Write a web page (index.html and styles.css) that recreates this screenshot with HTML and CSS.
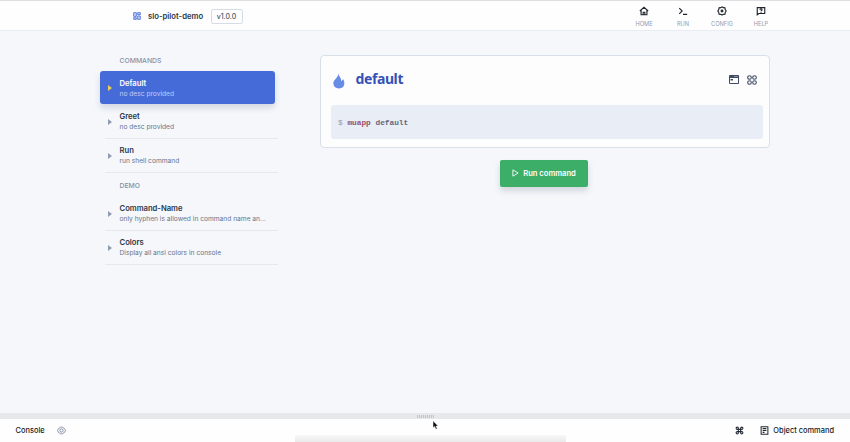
FILE: index.html
```html
<!DOCTYPE html>
<html lang="en">
<head>
<meta charset="utf-8">
<title>slo-pilot-demo</title>
<link rel="stylesheet" href="styles.css">
</head>
<body>
<header class="header">
  <div class="brand">
    <svg class="logo" viewBox="0 0 24 24"><path d="M2 2h8v11H2zM14 2h8v6h-8zM14 12h8v10h-8zM2 17h8v5H2z" fill="#c9d6fa" stroke="#4a6fdc" stroke-width="2.600"/></svg>
    <span class="brand-name">slo-pilot-demo</span>
    <span class="version">v1.0.0</span>
  </div>
  <nav class="nav">
    <a class="nav-item"><svg viewBox="0 0 24 24"><path d="M2 12 12 3l10 9M5 10v11h14V10M10 21v-6h4v6"/></svg>HOME</a>
    <a class="nav-item"><svg viewBox="0 0 24 24"><path d="m3 5 7 7-7 7M12 20h10"/></svg>RUN</a>
    <a class="nav-item"><svg viewBox="0 0 24 24"><path d="m12 2 3 2 4 .5.8 4L22 12l-2.200 3.500-.8 4-4 .5-3 2-3-2-4-.5-.8-4L2 12l2.200-3.500.8-4L9 4z"/><circle cx="12" cy="12" r="2.200"/></svg>CONFIG</a>
    <a class="nav-item"><svg viewBox="0 0 24 24"><path d="M3 21V4h18v14H7zM9.500 9c0-3 5-3 5 0 0 2-2.500 1.500-2.500 3.500M12 14.200v1.800"/></svg>HELP</a>
  </nav>
</header>
<main class="main">
  <aside class="sidebar">
    <h2 class="group">COMMANDS</h2>
    <div class="item active"><i class="arrow"></i><div class="item-text"><b>Default</b><p>no desc provided</p></div></div>
    <div class="item"><i class="arrow"></i><div class="item-text"><b>Greet</b><p>no desc provided</p></div></div>
    <div class="item"><i class="arrow"></i><div class="item-text"><b>Run</b><p>run shell command</p></div></div>
    <h2 class="group demo">DEMO</h2>
    <div class="item"><i class="arrow"></i><div class="item-text"><b>Command-Name</b><p>only hyphen is allowed in command name an...</p></div></div>
    <div class="item"><i class="arrow"></i><div class="item-text"><b>Colors</b><p>Display all ansi colors in console</p></div></div>
  </aside>
  <section class="content">
    <article class="card">
      <div class="card-head">
        <svg class="flame" viewBox="0 0 12 17"><path d="M5.500 0C5.500 2 6 3 7 4.200c1 1.300 1.600 2.600 1.100 4.300 1.200-.2 1.900-.9 2.200-2C13.200 11 11.500 16.500 6 16.500 2.500 16.500 0 14 0 11c0-2.500 1.500-3.700 3-5.500C4.500 4 5.300 2 5.500 0z"/></svg>
        <h1>default</h1>
        <div class="tools">
          <svg class="window" viewBox="0 0 20 18"><path d="M1 1h18v16H1z" fill="none" stroke="#414b65" stroke-width="2"/><path d="M1 1h18v5H1zM3 8h5v3H3z" fill="#414b65"/><path d="M11 3h2M15 3h2" stroke="#fff" stroke-width="1.500"/></svg>
          <svg class="grid" viewBox="0 0 20 20"><g fill="none" stroke="#414b65" stroke-width="2.200"><circle cx="5" cy="5" r="3.600"/><circle cx="15" cy="5" r="3.600"/><circle cx="5" cy="15" r="3.600"/><circle cx="15" cy="15" r="3.600"/></g></svg>
        </div>
      </div>
      <pre class="code"><span class="prompt">$</span> <span class="app">muapp</span> default</pre>
    </article>
    <button class="run"><svg viewBox="0 0 8 9"><path d="M1 .9 7 4.500 1 8.100z"/></svg>Run command</button>
  </section>
</main>
<div class="resizer"><span class="grip"></span></div>
<footer class="footer">
  <span class="console">Console</span>
  <svg class="eye" viewBox="0 0 24 24"><path d="M1.500 12C6 0 18 0 22.500 12 18 24 6 24 1.500 12z"/><circle cx="12" cy="12" r="4.300"/></svg>
  <svg class="cmd" viewBox="0 0 24 24"><path d="M9 9V6a3 3 0 1 0-3 3h12a3 3 0 1 0-3-3v12a3 3 0 1 0 3-3H6a3 3 0 1 0 3 3z"/></svg>
  <svg class="note" viewBox="0 0 24 24"><path d="M3 2h18v20H3zM7 7h10M7 12h10M7 17h5"/></svg>
  <span>Object command</span>
  <span class="dock"></span>
</footer>
<svg class="cursor" viewBox="0 0 7 10"><path d="M1 .8v7l1.500-1.300L4 9.300l1.200-.7-1.300-2.500h2.300z" fill="#111" stroke="#fff" stroke-width=".5"/></svg>
</body>
</html>
```
FILE: styles.css
```css
* { box-sizing: border-box; }
body {
  margin: 0;
  height: 442px;
  display: flex;
  flex-direction: column;
  overflow: hidden;
  background: #f5f7fb;
  color: #2d3748;
  font-family: Inter, sans-serif;
}
svg { display: block; flex: none; }
h1, h2, p, pre { margin: 0; }
.header {
  height: 31px;
  flex: none;
  display: flex;
  justify-content: space-between;
  padding: 0 69.500px 0 133px;
  background: #fefefe;
  border-top: 1px solid #dedfe1;
  border-bottom: 1px solid #e8edf4;
}
.brand { display: flex; align-items: center; padding-top: 1px; font-size: 7.7px; font-weight: 600; }
.logo { width: 8px; height: 8px; margin: -1px 7px 0 0; }
.brand-name { width: 62.500px; white-space: nowrap; }
.version {
  height: 15px;
  width: 32px;
  line-height: 13px;
  text-align: center;
  border: 1px solid #d5dce6;
  border-radius: 2px;
  color: #4a5568;
  font-size: 7px;
  font-weight: 500;
}
.nav { display: flex; padding-top: 5px; }
.nav-item {
  width: 39px;
  display: flex;
  flex-direction: column;
  align-items: center;
  gap: 4px;
  color: #929cb0;
  font-size: 5.7px;
  line-height: 7px;
}
.nav-item svg { width: 10px; height: 10px; fill: none; stroke: #20252e; stroke-width: 2.7; }
.main { flex: 1; min-height: 0; display: flex; padding: 24px 80px 0 100px; gap: 45px; }
.sidebar { width: 175px; flex: none; }
.group {
  height: 16px;
  padding: 1px 0 0 19.500px;
  color: #8490a6;
  font-size: 6.8px;
  line-height: 9px;
  font-weight: 500;
}
.demo { height: 24px; padding-top: 8px; }
.item { position: relative; height: 34px; display: flex; align-items: center; padding-left: 8px; }
.item:not(.active)::after {
  content: "";
  position: absolute;
  left: 5px;
  right: -3px;
  bottom: 0;
  height: 1px;
  background: #e4e9f0;
}
.active {
  height: 33px;
  margin-bottom: 1px;
  background: #456bd8;
  border-radius: 3px;
  box-shadow: 0 4px 6px rgba(50, 65, 100, .17);
}
.arrow { border: 3px solid transparent; border-left: 4px solid #929cb1; border-right: 0; }
.active .arrow { border-left-color: #edcd58; }
.item-text { width: 150px; margin-left: 7.500px; }
.active .item-text { padding-top: 2px; }
.item b { display: block; font-size: 7.65px; line-height: 11px; font-weight: 600; }
.item p {
  white-space: nowrap;
  color: #68758c;
  font-size: 6.65px;
  line-height: 11px;
}
.active b { color: #fff; }
.active p { color: #c0cefa; }
.content { width: 450px; display: flex; flex-direction: column; align-items: center; }
.card {
  width: 450px;
  height: 93px;
  padding: 0 6px 0 10px;
  border: 1px solid #d8dfe9;
  border-radius: 4px;
  background: #fdfdfe;
}
.card-head { height: 49px; display: flex; align-items: center; padding: 0 6px 2px 0; }
.flame { width: 12px; height: 16px; margin: 2px 0 0 2px; fill: #688be6; }
h1 { margin: -1px 0 0 10.500px; color: #3452b5; font-family: "Noto Sans", sans-serif; font-size: 14px; line-height: 20px; font-weight: 700; letter-spacing: -.4px; }
.tools { display: flex; align-items: center; gap: 8px; margin-left: auto; }
.window { width: 10px; height: 9px; }
.grid { width: 10px; height: 10px; }
.code {
  height: 34px;
  padding-left: 7px;
  background: #e9edf6;
  border-radius: 3px;
  color: #5c6881;
  font: 600 7.8px/34px Roboto, sans-serif;
  font: bold 7.8px/36px "Liberation Mono", monospace;
}
.prompt { color: #929caf; font-weight: 400; }
.app { color: #94506f; }
.run {
  width: 88px;
  height: 27px;
  margin: 12px 2px 0 0;
  padding: 0 0 1px;
  display: flex;
  align-items: center;
  justify-content: center;
  gap: 4px;
  border: 0;
  border-radius: 2px;
  background: #3cae68;
  box-shadow: 0 4px 6px rgba(40, 60, 80, .17);
  color: #fff;
  font: 600 7.6px Inter, sans-serif;
}
.run svg { width: 7px; height: 8px; fill: none; stroke: #fff; }
.resizer { height: 6px; flex: none; display: flex; align-items: center; justify-content: center; background: #e7e8e9; }
.grip { width: 17px; height: 3px; background: repeating-linear-gradient(90deg, #c5c6c8 0 1px, #e1e2e3 1px 2px); }
.footer {
  position: relative;
  height: 23px;
  flex: none;
  display: flex;
  align-items: center;
  padding: 0 16px 1px 15.500px;
  background: #fefefe;
  color: #15191f;
  font-size: 7.45px;
  font-weight: 500;
}
.footer svg { fill: none; stroke: #252b35; stroke-width: 2.800; }
.console { width: 41px; }
.footer .eye { width: 9px; height: 9px; stroke: #77839b; stroke-width: 2.3; }
.cmd { width: 9px; height: 9px; margin-left: auto; }
.note { width: 9px; height: 9px; margin: 0 4px 0 16.500px; }
.dock {
  position: absolute;
  left: 295px;
  bottom: 0;
  width: 271px;
  height: 7px;
  background: linear-gradient(#f8f8f8, #e9e9e9);
  border-radius: 3px 3px 0 0;
}
.cursor { position: absolute; left: 432px; top: 420px; width: 7px; height: 10px; }
```
